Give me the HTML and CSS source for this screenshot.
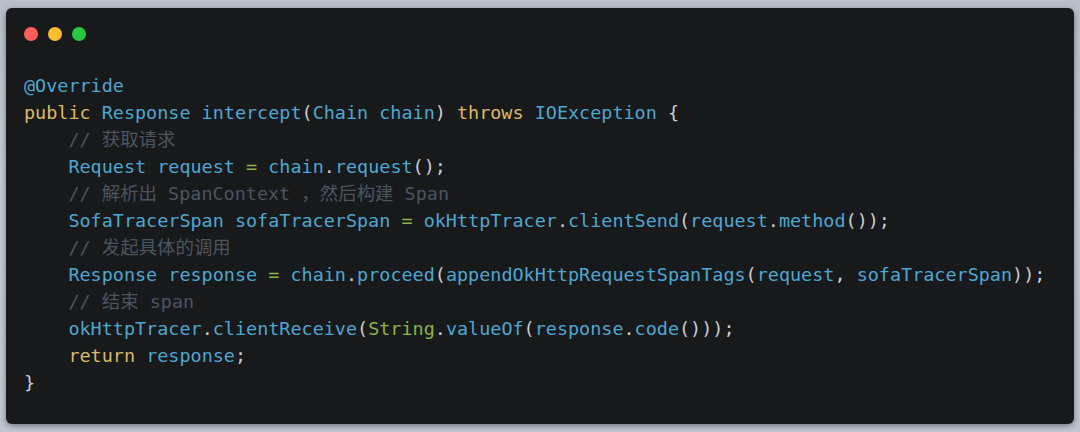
FILE: index.html
```html
<!DOCTYPE html>
<html>
<head>
<meta charset="utf-8">
<link rel="stylesheet" href="styles.css">
</head>
<body>
<div class="window">
  <div class="dots">
    <span class="dot red"></span>
    <span class="dot yellow"></span>
    <span class="dot green"></span>
  </div>
<pre class="code"><span class="an">@Override</span>
<span class="kw">public</span> <span class="id">Response intercept</span><span class="p">(</span><span class="id">Chain chain</span><span class="p">)</span> <span class="kw">throws</span> <span class="id">IOException</span> <span class="p">{</span>
    <span class="cm">// 获取请求</span>
    <span class="id">Request request</span> <span class="op">=</span> <span class="id">chain</span><span class="p">.</span><span class="id">request</span><span class="p">();</span>
    <span class="cm">// 解析出 SpanContext ，然后构建 Span</span>
    <span class="id">SofaTracerSpan sofaTracerSpan</span> <span class="op">=</span> <span class="id">okHttpTracer</span><span class="p">.</span><span class="id">clientSend</span><span class="p">(</span><span class="id">request</span><span class="p">.</span><span class="id">method</span><span class="p">());</span>
    <span class="cm">// 发起具体的调用</span>
    <span class="id">Response response</span> <span class="op">=</span> <span class="id">chain</span><span class="p">.</span><span class="id">proceed</span><span class="p">(</span><span class="id">appendOkHttpRequestSpanTags</span><span class="p">(</span><span class="id">request</span><span class="p">,</span> <span class="id">sofaTracerSpan</span><span class="p">));</span>
    <span class="cm">// 结束 span</span>
    <span class="id">okHttpTracer</span><span class="p">.</span><span class="id">clientReceive</span><span class="p">(</span><span class="ty">String</span><span class="p">.</span><span class="id">valueOf</span><span class="p">(</span><span class="id">response</span><span class="p">.</span><span class="id">code</span><span class="p">()));</span>
    <span class="kw">return</span> <span class="id">response</span><span class="p">;</span>
<span class="p">}</span></pre>
</div>
</body>
</html>
```

FILE: styles.css
```css
html, body {
  margin: 0;
  padding: 0;
}
body {
  width: 1080px;
  height: 432px;
  background: linear-gradient(#b9c0c8, #c6ccd3 40%, #c3c9d0);
  overflow: hidden;
}
.window {
  margin: 8px 6px 0 6px;
  height: 416px;
  background: #18191b;
  border-radius: 6px;
  box-shadow: 0 2px 6px rgba(40, 50, 65, 0.55);
  padding: 0 18px;
  box-sizing: border-box;
  overflow: hidden;
}
.dots {
  display: flex;
  gap: 10px;
  padding-top: 19px;
}
.dot {
  width: 14px;
  height: 14px;
  border-radius: 50%;
  display: block;
}
.red { background: #fe5f57; }
.yellow { background: #febc2e; }
.green { background: #28c840; }
.code {
  margin: 31px 0 0 0;
  font-family: "DejaVu Sans Mono", "Noto Sans CJK SC", monospace;
  font-size: 18.45px;
  line-height: 27px;
  color: #c9ced4;
  white-space: pre;
}
.an { color: #4ea7d2; }
.kw { color: #dcb962; }
.id { color: #4ea7d2; }
.ty { color: #8db247; }
.op { color: #8db247; }
.p { color: #c9ced4; }
.cm { color: #4a5560; }
```
